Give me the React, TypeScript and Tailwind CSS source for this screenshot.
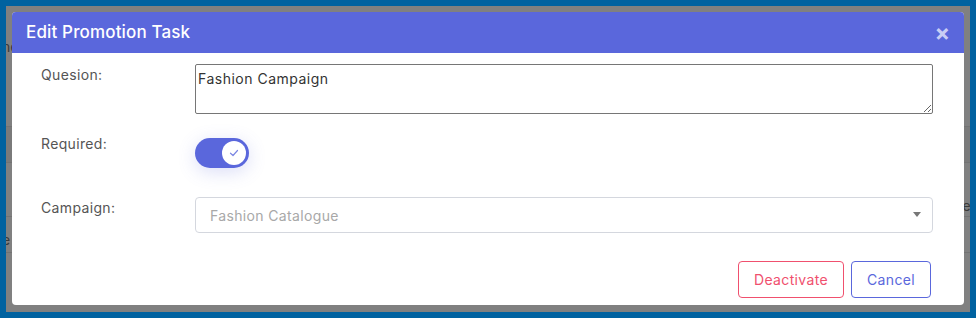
import React, { useState } from 'react';

const font = { fontFamily: 'Inter, "Noto Sans", sans-serif' };

export default function App() {
  const [required, setRequired] = useState(true);

  return (
    <div className="w-[976px] h-[318px] bg-[#0062a0] p-[6px]" style={font}>
      <div className="relative h-full bg-[#808080] overflow-hidden">
        {/* Page underneath the overlay */}
        <div className="flex flex-col text-[14px] text-[#3a3a3a]">
          <div className="h-[30px]" />
          <div className="h-[20px] flex items-center">
            <span className="-ml-[4px]">ne</span>
          </div>
          <div className="h-[70px]" />
          <div className="h-[36px] border-t border-[#737373] bg-[#7a7a7a]" />
          <div className="h-[54px] border-t border-[#737373] flex items-end justify-end">
            <span className="-mr-[6px]">er</span>
          </div>
          <div className="h-[36px] border-t border-[#737373] flex items-end pb-[2px]">
            <span className="-ml-[4px]">e</span>
          </div>
          <div className="h-[40px] border-t border-[#737373]" />
        </div>

        {/* Modal */}
        <div className="absolute left-[6px] top-[6px] w-[952px] h-[293px] bg-white rounded-[4px] overflow-hidden">
          <div className="h-[41px] bg-[#5a67dc] flex items-center justify-between pl-[14px] pr-[14px]">
            <h2 className="text-white text-[17px] font-medium tracking-[0.15px]">Edit Promotion Task</h2>
            <button className="text-[#c9cdf5] text-[23px] font-bold leading-none mt-[2px]">×</button>
          </div>

          <div className="flex flex-col pl-[29px] pr-[31px] pt-[11px] tracking-[0.35px]">
            <div className="flex">
              <label className="w-[154px] pt-[1px] text-[14px] leading-[20px] text-[#555]">Quesion:</label>
              <textarea
                defaultValue="Fashion Campaign"
                className="flex-1 h-[50px] border border-[#767676] rounded-[2px] px-[2px] py-[3px] text-[14px] text-[#333] outline-none resize-y tracking-[0.5px]"
              />
            </div>

            <div className="flex mt-[24px]">
              <label className="w-[154px] -mt-[4px] text-[14px] leading-[20px] text-[#555]">Required:</label>
              <button
                onClick={() => setRequired(!required)}
                className={`w-[54px] h-[30px] rounded-full p-[3px] flex items-center shadow-[0_4px_18px_rgba(90,103,220,0.22)] ${required ? 'bg-[#5a67dc] justify-end' : 'bg-[#d7dbe8] justify-start'}`}
              >
                <span className="w-[24px] h-[24px] rounded-full bg-white flex items-center justify-center">
                  <svg width="12" height="12" viewBox="0 0 12 12" fill="none">
                    <path d="M2.5 6.2 L5 8.5 L9.5 3.5" stroke="#7c87e3" strokeWidth="1.2" strokeLinecap="round" strokeLinejoin="round" />
                  </svg>
                </span>
              </button>
            </div>

            <div className="flex mt-[29px]">
              <label className="w-[154px] pt-[1px] text-[14px] leading-[20px] text-[#555]">Campaign:</label>
              <div className="flex-1 h-[36px] border border-[#d4d7de] rounded-[4px] flex items-center justify-between pl-[14px] pr-[11px]">
                <span className="text-[14px] text-[#a8a8a8]">Fashion Catalogue</span>
                <svg width="8" height="6" viewBox="0 0 8 6">
                  <path d="M0 0 H8 L4 5 Z" fill="#777" />
                </svg>
              </div>
            </div>

            <div className="flex justify-end gap-[7px] mt-[28px] pr-[2px]">
              <button className="w-[106px] h-[37px] border border-[#f0506e] rounded-[4px] text-[14px] text-[#f0506e]">Deactivate</button>
              <button className="w-[80px] h-[37px] border border-[#5a67dc] rounded-[4px] text-[14px] text-[#5a67dc]">Cancel</button>
            </div>
          </div>
        </div>
      </div>
    </div>
  );
}
